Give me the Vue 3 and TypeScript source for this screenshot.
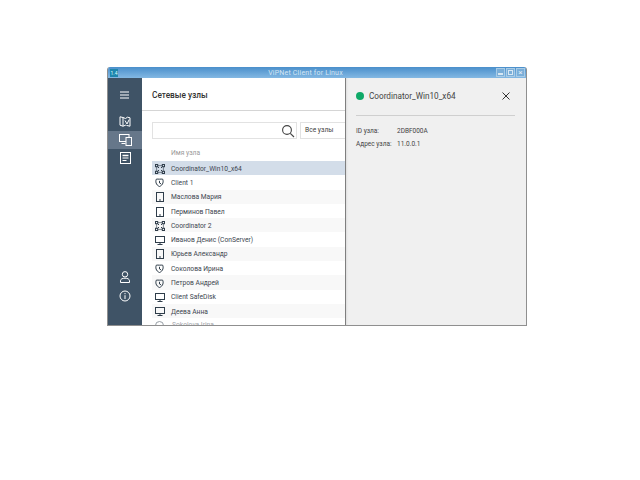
<script setup lang="ts">
type Kind = 'coord' | 'shield' | 'phone' | 'monitor'
const rows: { name: string; icon: Kind; sel?: boolean; alt?: boolean }[] = [
  { name: 'Coordinator_Win10_x64', icon: 'coord', sel: true },
  { name: 'Client 1', icon: 'shield' },
  { name: 'Маслова Мария', icon: 'phone', alt: true },
  { name: 'Перминов Павел', icon: 'phone' },
  { name: 'Coordinator 2', icon: 'coord', alt: true },
  { name: 'Иванов Денис (ConServer)', icon: 'monitor' },
  { name: 'Юрьев Александр', icon: 'phone', alt: true },
  { name: 'Соколова Ирина', icon: 'shield' },
  { name: 'Петров Андрей', icon: 'shield', alt: true },
  { name: 'Client SafeDisk', icon: 'monitor' },
  { name: 'Деева Анна', icon: 'monitor', alt: true },
]
</script>

<template>
  <div class="window">
    <header class="titlebar">
      <span class="appicon">1.4</span>
      <span class="title">ViPNet Client for Linux</span>
      <span class="winbtns">
        <i class="wb"><b class="wmin"></b></i>
        <i class="wb"><b class="wmax"></b></i>
        <i class="wb wx">×</i>
      </span>
    </header>
    <div class="body">
      <nav class="side">
        <button class="nb burger">
          <svg width="10" height="8" viewBox="0 0 10 8"><path d="M0 1h9M0 4h9M0 7h9" stroke="#fff" stroke-width="1.100" /></svg>
        </button>
        <div class="navgroup">
          <button class="nb">
            <svg width="12" height="11" viewBox="0 0 12 11" fill="none" stroke="#fff" stroke-width="1"><path d="M4 1.500 1 .8v8.400l3 1 2.500-1 1 .3" /><path d="M4 1.500 6.500 2.500 8.500 1.200l2.500.6v8.400l-3-.7" /><path d="M4 1.500v8.700" /><path d="M6 4.500 8 8l2.200-4.500" /></svg>
          </button>
          <button class="nb active">
            <svg width="13" height="12" viewBox="0 0 13 12" fill="none" stroke="#fff" stroke-width="1"><rect x=".5" y=".5" width="9.500" height="7" /><path d="M2.500 9.500h4" /><rect x="7" y="3.500" width="5.500" height="8" fill="#66778a" /></svg>
          </button>
          <button class="nb">
            <svg width="11" height="12" viewBox="0 0 11 12" fill="none" stroke="#fff" stroke-width="1"><rect x=".5" y=".5" width="10" height="11" /><path d="M2.500 3.500h6" stroke-width="1.400" /><path d="M2.500 6h6M2.500 8.500h4" /></svg>
          </button>
        </div>
        <div class="navbottom">
          <button class="nb">
            <svg width="12" height="12" viewBox="0 0 12 12" fill="none" stroke="#fff" stroke-width="1"><circle cx="6" cy="3.300" r="2.700" /><path d="M1.500 11.500V9.800C1.500 8 3.500 7.200 6 7.200s4.500.8 4.500 2.600v1.700z" /></svg>
          </button>
          <button class="nb">
            <svg width="12" height="12" viewBox="0 0 12 12" fill="none" stroke="#fff" stroke-width="1"><circle cx="6" cy="6" r="5" /><path d="M6 5.200V9M6 3v1.200" /></svg>
          </button>
        </div>
      </nav>
      <main class="main">
        <h1 class="heading">Сетевые узлы</h1>
        <div class="tools">
          <div class="search">
            <svg width="14" height="14" viewBox="0 0 14 14" fill="none" stroke="#444" stroke-width="1.100"><circle cx="6" cy="6" r="4.400" /><path d="M9.300 9.300 13 13" /></svg>
          </div>
          <div class="filter">Все узлы</div>
        </div>
        <div class="colhead">Имя узла</div>
        <ul class="list">
          <li v-for="r in rows" :key="r.name" class="row" :class="{ sel: r.sel, alt: r.alt }">
            <span class="ric">
              <svg v-if="r.icon === 'coord'" width="10" height="10" viewBox="0 0 10 10" fill="none" stroke="#2f3d4a" stroke-width="1"><rect x=".5" y=".5" width="2.200" height="2.200" /><rect x="7.300" y=".5" width="2.200" height="2.200" /><rect x=".5" y="7.300" width="2.200" height="2.200" /><rect x="7.300" y="7.300" width="2.200" height="2.200" /><path d="M2.700 1.600h4.600M2.700 8.400h4.600M1.600 2.700v4.600M8.400 2.700v4.600" stroke-width=".6" /><path d="M2.700 2.700 4 4M7.300 2.700 6 4M2.700 7.300 4 6M7.300 7.300 6 6" /></svg>
              <svg v-else-if="r.icon === 'shield'" width="9" height="9" viewBox="0 0 9 9" fill="none" stroke="#2f3d4a" stroke-width="1"><path d="M1.500 1C3 1.200 6 1.200 7.500 1 8.800 3 8.300 7 4.500 8.500.7 7 .2 3 1.500 1z" /><path d="M4.500 2.800v2.200L6 5.800" /></svg>
              <svg v-else-if="r.icon === 'phone'" width="8" height="10" viewBox="0 0 8 10" fill="none" stroke="#2f3d4a" stroke-width="1"><rect x=".5" y=".5" width="7" height="9" /><path d="M3 8h2" /></svg>
              <svg v-else width="10" height="9" viewBox="0 0 10 9" fill="none" stroke="#2f3d4a" stroke-width="1"><rect x=".5" y=".5" width="9" height="6" /><path d="M2.500 8.500h5M5 6.500v2" /></svg>
            </span>
            <span class="rname">{{ r.name }}</span>
          </li>
        </ul>
        <div class="cut"><svg width="9" height="9" viewBox="0 0 9 9" fill="none" stroke="#2f3d4a" stroke-width="1"><circle cx="4.500" cy="4.500" r="4" /></svg><span>Sokolova Irina</span></div>
      </main>
      <aside class="panel">
        <div class="phead">
          <span class="dot"></span>
          <span class="pname">Coordinator_Win10_x64</span>
          <svg class="close" width="8" height="8" viewBox="0 0 8 8" fill="none" stroke="#333" stroke-width="1"><path d="M.5.5l7 7M7.500.5l-7 7" /></svg>
        </div>
        <dl class="props">
          <dt>ID узла:</dt><dd>2DBF000A</dd>
          <dt>Адрес узла:</dt><dd>11.0.0.1</dd>
        </dl>
      </aside>
    </div>
  </div>
</template>

<style scoped>
.window {
  box-sizing: border-box;
  width: 420px;
  height: 259px;
  margin: 67px 0 0 107px;
  border: 1px solid #8f8f8f;
  border-top: 0;
  border-radius: 3px 3px 0 0;
  display: flex;
  flex-direction: column;
  font-family: "Roboto", "Liberation Sans", sans-serif;
  font-size: 6.700px;
  color: #444;
  background: #fff;
  overflow: hidden;
  opacity: 0.995;
}
.titlebar {
  height: 11px;
  flex: none;
  background: linear-gradient(#4a8fcb, #83b8e3);
  display: flex;
  align-items: center;
  justify-content: center;
  position: relative;
  padding-right: 23px;
  color: #d5e6f4;
  font-size: 7px;
  letter-spacing: 0.2px;
}
.appicon {
  position: absolute;
  left: 2px;
  top: 1.500px;
  width: 8px;
  height: 8px;
  background: #1f86ad;
  color: #dff;
  font-size: 5px;
  line-height: 8px;
  text-align: center;
  letter-spacing: 0;
}
.winbtns {
  position: absolute;
  right: 1px;
  top: 1px;
  display: flex;
  gap: 1px;
}
.wb {
  box-sizing: border-box;
  width: 9px;
  height: 9px;
  border: 1px solid #a8cbe6;
  background: #7aaed8;
  display: flex;
  align-items: center;
  justify-content: center;
  font-style: normal;
  color: #e4eff8;
  font-size: 8px;
  line-height: 7px;
}
.wmin { width: 5px; height: 2px; background: #d8e8f4; margin-top: 3px; }
.wmax { width: 3px; height: 3px; border: 1px solid #d8e8f4; }
.body { flex: 1; display: flex; min-height: 0; }
.side {
  width: 34px;
  flex: none;
  background: #3f5366;
  display: flex;
  flex-direction: column;
  padding-top: 8px;
  box-sizing: border-box;
}
.nb {
  display: flex;
  align-items: center;
  justify-content: center;
  width: 34px;
  height: 18.500px;
  padding: 0;
  border: 0;
  background: none;
}
.burger { height: 17px; }
.active { background: #66778a; }
.navgroup { margin-top: 9px; display: flex; flex-direction: column; }
.navbottom { margin-top: auto; margin-bottom: 20px; display: flex; flex-direction: column; }
.main {
  width: 203px;
  flex: none;
  background: #fff;
  overflow: hidden;
  display: flex;
  flex-direction: column;
}
.heading {
  margin: 0;
  flex: none;
  height: 33px;
  box-sizing: border-box;
  border-bottom: 1px solid #d5d5d5;
  padding: 10px 0 0 10px;
  font-size: 8.300px;
  font-weight: 500;
  color: #333;
  line-height: 14px;
}
.tools { flex: none; display: flex; gap: 3px; padding: 11px 0 0 10px; }
.search {
  box-sizing: border-box;
  width: 145px;
  height: 17px;
  flex: none;
  border: 1px solid #e2e2e2;
  display: flex;
  align-items: center;
  justify-content: flex-end;
  padding-right: 1px;
}
.filter {
  box-sizing: border-box;
  flex: 1;
  height: 17px;
  border: 1px solid #e2e2e2;
  border-right: 0;
  padding-left: 4px;
  line-height: 15px;
}
.colhead { flex: none; height: 22px; padding: 9px 0 0 29px; box-sizing: border-box; color: #9a9a9a; line-height: 10px; }
.list { flex: none; list-style: none; margin: 0; padding: 0 0 0 10px; }
.row { box-sizing: border-box; height: 14.300px; padding-top: 1px; display: flex; align-items: center; }
.alt { background: #f8f8f8; }
.sel { background: #d3dde9; }
.ric { width: 15px; margin-right: 4px; display: flex; justify-content: center; }
.rname { color: #3d4650; white-space: nowrap; }
.cut { flex: none; display: flex; gap: 8px; padding: 3px 0 0 13px; color: #3d4650; opacity: .5; }
.panel {
  flex: 1;
  background: #f0f0f0;
  border-left: 1px solid #7f7f7f;
  box-shadow: inset 2px 0 2px -1px #ddd;
  padding: 0 11px 0 10px;
  box-sizing: border-box;
}
.phead {
  height: 38px;
  border-bottom: 1px solid #cfcfcf;
  display: flex;
  align-items: center;
  padding-bottom: 1px;
  box-sizing: border-box;
}
.dot { width: 8px; height: 8px; border-radius: 50%; background: #0fa968; margin-right: 5px; }
.pname { font-size: 8.200px; color: #444; flex: 1; }
.close { margin-right: 5px; }
.props {
  margin: 9px 0 0;
  display: grid;
  grid-template-columns: 41px auto;
  grid-auto-rows: 13.300px;
  justify-content: start;
  line-height: 13px;
  font-size: 6.500px;
}
dt, dd { margin: 0; }
</style>
